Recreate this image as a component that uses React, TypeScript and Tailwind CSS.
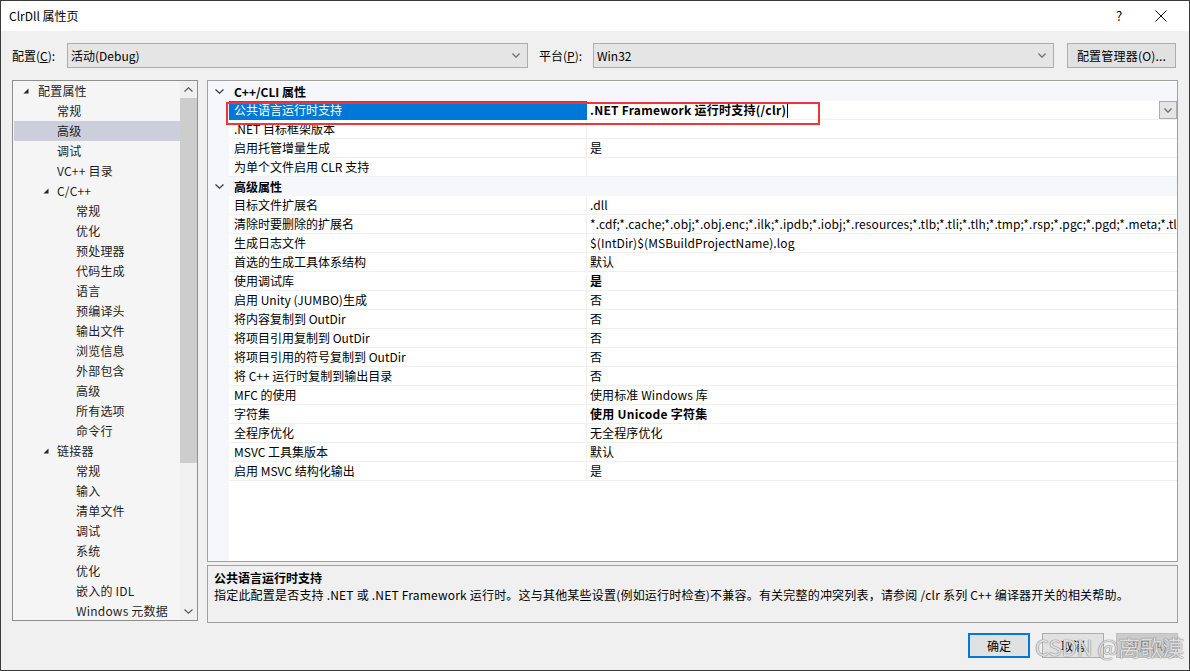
import React from "react";

const FONT = { fontFamily: '"Noto Sans CJK SC", "Noto Sans", sans-serif' };

function Tri() {
  return (
    <svg width="6" height="6" viewBox="0 0 6 6" className="block">
      <polygon points="5.5,0.5 5.5,5.5 0.5,5.5" fill="#262626" />
    </svg>
  );
}

function Chevron({ up = false, color = "#606060", w = 8, h = 5 }: { up?: boolean; color?: string; w?: number; h?: number }) {
  return (
    <svg width={w} height={h} viewBox={`0 0 ${w} ${h}`} className="block">
      {up ? (
        <polyline points={`0.5,${h - 0.5} ${w / 2},0.8 ${w - 0.5},${h - 0.5}`} fill="none" stroke={color} strokeWidth="1.3" />
      ) : (
        <polyline points={`0.5,0.5 ${w / 2},${h - 0.8} ${w - 0.5},0.5`} fill="none" stroke={color} strokeWidth="1.3" />
      )}
    </svg>
  );
}

type TreeItem = { t: string; lvl: number; exp?: boolean; sel?: boolean };
const tree: TreeItem[] = [
  { t: "配置属性", lvl: 0, exp: true },
  { t: "常规", lvl: 1 },
  { t: "高级", lvl: 1, sel: true },
  { t: "调试", lvl: 1 },
  { t: "VC++ 目录", lvl: 1 },
  { t: "C/C++", lvl: 1, exp: true },
  { t: "常规", lvl: 2 },
  { t: "优化", lvl: 2 },
  { t: "预处理器", lvl: 2 },
  { t: "代码生成", lvl: 2 },
  { t: "语言", lvl: 2 },
  { t: "预编译头", lvl: 2 },
  { t: "输出文件", lvl: 2 },
  { t: "浏览信息", lvl: 2 },
  { t: "外部包含", lvl: 2 },
  { t: "高级", lvl: 2 },
  { t: "所有选项", lvl: 2 },
  { t: "命令行", lvl: 2 },
  { t: "链接器", lvl: 1, exp: true },
  { t: "常规", lvl: 2 },
  { t: "输入", lvl: 2 },
  { t: "清单文件", lvl: 2 },
  { t: "调试", lvl: 2 },
  { t: "系统", lvl: 2 },
  { t: "优化", lvl: 2 },
  { t: "嵌入的 IDL", lvl: 2 },
  { t: "Windows 元数据", lvl: 2 },
];

type Row =
  | { cat: string }
  | { name: string; value?: string; bold?: boolean; sel?: boolean };

const rows: Row[] = [
  { cat: "C++/CLI 属性" },
  { name: "公共语言运行时支持", value: ".NET Framework 运行时支持(/clr)", bold: true, sel: true },
  { name: ".NET 目标框架版本", value: "" },
  { name: "启用托管增量生成", value: "是" },
  { name: "为单个文件启用 CLR 支持", value: "" },
  { cat: "高级属性" },
  { name: "目标文件扩展名", value: ".dll" },
  {
    name: "清除时要删除的扩展名",
    value:
      "*.cdf;*.cache;*.obj;*.obj.enc;*.ilk;*.ipdb;*.iobj;*.resources;*.tlb;*.tli;*.tlh;*.tmp;*.rsp;*.pgc;*.pgd;*.meta;*.tlog;*.manifest;*.res;*.pch;*.exp;*.idb;*.rep;*.xdc;*.pdb",
  },
  { name: "生成日志文件", value: "$(IntDir)$(MSBuildProjectName).log" },
  { name: "首选的生成工具体系结构", value: "默认" },
  { name: "使用调试库", value: "是", bold: true },
  { name: "启用 Unity (JUMBO)生成", value: "否" },
  { name: "将内容复制到 OutDir", value: "否" },
  { name: "将项目引用复制到 OutDir", value: "否" },
  { name: "将项目引用的符号复制到 OutDir", value: "否" },
  { name: "将 C++ 运行时复制到输出目录", value: "否" },
  { name: "MFC 的使用", value: "使用标准 Windows 库" },
  { name: "字符集", value: "使用 Unicode 字符集", bold: true },
  { name: "全程序优化", value: "无全程序优化" },
  { name: "MSVC 工具集版本", value: "默认" },
  { name: "启用 MSVC 结构化输出", value: "是" },
];

function Combo({ text }: { text: string }) {
  return (
    <div className="w-[461px] h-[25px] border border-[#adadad] bg-[#e5e5e5] flex items-center pl-[3px] pr-[7px]">
      <span className="flex-1 text-[12px] text-black">{text}</span>
      <Chevron w={8} h={5} color="#707070" />
    </div>
  );
}

function Btn({ children, primary = false, disabled = false }: { children: React.ReactNode; primary?: boolean; disabled?: boolean }) {
  return (
    <div
      className={
        "w-[62px] h-[25px] flex items-center justify-center text-[12px] " +
        (primary
          ? "border-2 border-[#0078d7] bg-[#e1e1e1] text-black"
          : disabled
          ? "border border-[#bfbfbf] bg-[#cccccc] text-[#838383]"
          : "border border-[#adadad] bg-[#e1e1e1] text-black")
      }
    >
      {children}
    </div>
  );
}

export default function App() {
  return (
    <div
      className="w-[1190px] h-[671px] border border-[#3a3a3a] bg-[#f0f0f0] flex flex-col overflow-hidden relative text-black"
      style={FONT}
    >
      {/* title bar */}
      <div className="h-[30px] bg-white flex items-center pl-[8px] shrink-0">
        <span className="text-[12px] flex-1">ClrDll 属性页</span>
        <span className="text-[13px] w-[20px] text-center mr-[26px]">?</span>
        <svg width="12" height="12" viewBox="0 0 12 12" className="mr-[22px]">
          <path d="M0.5 0.5 L11.5 11.5 M11.5 0.5 L0.5 11.5" stroke="#111" strokeWidth="1" />
        </svg>
      </div>

      {/* config row */}
      <div className="flex items-center pl-[11px] pt-[12px] pb-[12px] shrink-0 text-[12px]">
        <span className="w-[55px]">
          配置(<u>C</u>):
        </span>
        <Combo text="活动(Debug)" />
        <span className="w-[54px] ml-[11px]">
          平台(<u>P</u>):
        </span>
        <Combo text="Win32" />
        <div className="ml-[13px] w-[109px] h-[25px] border border-[#adadad] bg-[#e1e1e1] flex items-center justify-center tracking-[0.2px]">
          配置管理器(O)...
        </div>
      </div>

      {/* main area */}
      <div className="flex pl-[11px] shrink-0">
        {/* tree */}
        <div className="w-[186px] h-[541px] border border-[#8e8f8f] bg-[#f5f5f5] flex overflow-hidden">
          <div className="flex-1 flex flex-col overflow-hidden">
            {tree.map((it, i) => (
              <div
                key={i}
                className={
                  "h-[20px] shrink-0 flex items-center text-[12px] text-[#1e1e1e] ml-[1px] " +
                  (it.sel ? "bg-[#cccedb]" : "")
                }
              >
                <div
                  className={
                    "flex items-center justify-start " +
                    (it.lvl === 0 ? "w-[24px] pl-[9px]" : it.lvl === 1 ? "w-[43px] pl-[29px]" : "w-[62px]")
                  }
                >
                  {it.exp ? <Tri /> : null}
                </div>
                <span className="whitespace-nowrap tracking-[0.2px]">{it.t}</span>
              </div>
            ))}
          </div>
          {/* scrollbar */}
          <div className="w-[17px] bg-[#f0f0f0] flex flex-col shrink-0">
            <div className="h-[17px] flex items-center justify-center">
              <Chevron up w={9} h={5} color="#606060" />
            </div>
            <div className="h-[365px] bg-[#cdcdcd]" />
            <div className="flex-1" />
            <div className="h-[17px] flex items-center justify-center">
              <Chevron w={9} h={5} color="#606060" />
            </div>
          </div>
        </div>

        {/* right column */}
        <div className="ml-[9px] w-[971px] flex flex-col">
          {/* grid */}
          <div className="h-[482px] border border-[#a0a0a0] bg-white relative overflow-hidden flex">
            <div className="w-[21px] bg-[#f5f7fb] shrink-0" />
            <div className="flex-1 flex flex-col pt-[1px] min-w-0">
              {rows.map((r, i) =>
                "cat" in r ? (
                  <div key={i} className="h-[19px] shrink-0 flex items-center bg-[#f5f7fb] -ml-[21px] relative">
                    <div className="w-[21px] flex items-center justify-center pl-[1px]">
                      <Chevron w={9} h={5} color="#3c3c3c" />
                    </div>
                    <span className="pl-[5px] text-[12px] font-bold">{r.cat}</span>
                  </div>
                ) : (
                  <div key={i} className="h-[19px] shrink-0 flex text-[12px]">
                    <div
                      className={
                        "w-[358px] shrink-0 flex items-center pl-[5px] border-r border-b " +
                        (r.sel ? "bg-[#0078d7] text-white border-[#0078d7]" : "border-[#f0f0f0]")
                      }
                    >
                      <span className="whitespace-nowrap">{r.name}</span>
                    </div>
                    <div className="flex-1 min-w-0 flex items-center pl-[3px] border-b border-[#f0f0f0] overflow-hidden">
                      <span className={"whitespace-nowrap " + (r.bold ? "font-bold tracking-[0.25px]" : "tracking-[0.1px]")}>{r.value}</span>
                      {r.sel ? <span className="inline-block w-[1px] h-[15px] bg-black ml-[1px] shrink-0" /> : null}
                      {r.sel ? (
                        <div className="ml-auto w-[18px] h-[18px] border border-[#adadad] bg-[#e5e5e5] flex items-center justify-center shrink-0">
                          <Chevron w={8} h={5} color="#707070" />
                        </div>
                      ) : null}
                    </div>
                  </div>
                )
              )}
            </div>
            {/* red highlight box */}
            <div className="absolute left-[18px] top-[21px] w-[594px] h-[23px] border-2 border-[#f2333a] pointer-events-none" />
          </div>

          {/* description */}
          <div className="mt-[3px] h-[58px] border border-[#a0a0a0] bg-[#f0f0f0] pl-[6px] pt-[3px] text-[12px] leading-[17px]">
            <div className="font-bold">公共语言运行时支持</div>
            <div className="whitespace-nowrap tracking-[0.2px]">
              指定此配置是否支持 .NET 或 .NET Framework 运行时。这与其他某些设置(例如运行时检查)不兼容。有关完整的冲突列表，请参阅 /clr 系列 C++ 编译器开关的相关帮助。
            </div>
          </div>
        </div>
      </div>

      {/* buttons */}
      <div className="flex justify-end gap-[12px] pr-[11px] mt-[10px] shrink-0">
        <Btn primary>确定</Btn>
        <Btn>取消</Btn>
        <Btn disabled>应用(A)</Btn>
      </div>

      {/* watermark */}
      <div
        className="absolute left-[1034px] top-[631px] text-[22px] leading-[28px] text-[rgba(255,255,255,0.75)] whitespace-nowrap pointer-events-none [text-shadow:0_0_1px_#777,0_0_1px_#777]"
        style={FONT}
      >
        CSDN @离歌漠
      </div>
    </div>
  );
}
